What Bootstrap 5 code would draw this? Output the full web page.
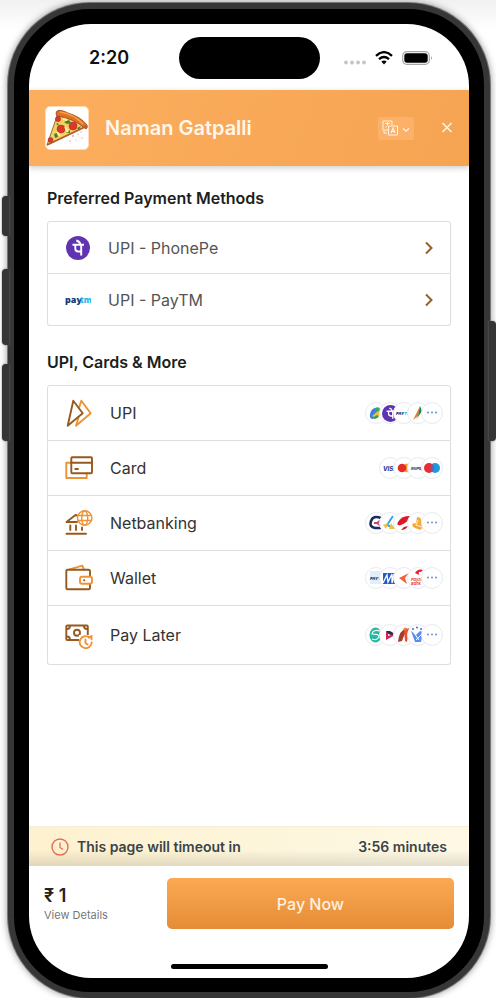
<!DOCTYPE html>
<html lang="en">
<head>
<meta charset="utf-8">
<meta name="viewport" content="width=device-width, initial-scale=1">
<title>Checkout - Naman Gatpalli</title>
<link href="https://cdn.jsdelivr.net/npm/bootstrap@5.3.0/dist/css/bootstrap.min.css" rel="stylesheet">
<style>
body{font-family:Inter,"Liberation Sans",sans-serif;font-size:16px;line-height:24px;min-height:100vh;padding:3px 6px 0 8px;background:linear-gradient(to bottom,#f1f1f1,#fff 30px);overflow-x:hidden}
.phone{position:relative;border:6px solid #363636;border-radius:82px;padding:15px 15px 14px;background:#000;box-shadow:0 0 0 1px #777,0 0 7px 1px #9a9a9a}
.side{position:absolute;width:7px;background:#353535;box-shadow:0 0 2px #777}
.side-l{left:-12px;border-radius:4px 0 0 4px}
.side-r{right:-12px;border-radius:0 4px 4px 0;top:312px;height:120px}
.side-mute{top:187px;height:40px}.side-up{top:260px;height:76px}.side-down{top:355px;height:77px}
.screen{background:#fff;border-radius:62px;overflow:hidden}
.status{display:grid;grid-template-columns:1fr 141px 1fr;height:66px;padding-top:2px}
.status time{font-size:18px;font-weight:600;color:#111;padding-left:60px}
.island{height:42px;border-radius:21px;background:#000}
.status-icons{padding-right:36px;gap:9px}
.brand{height:76px;padding:0 15px 0 16px;background:linear-gradient(110deg,#fcae5e,#f5a452);box-shadow:0 2px 6px #0003;position:relative}
.brand-logo{width:44px;height:44px;border-radius:5px;background:#fff;border:1px solid #ffdcb5}
.brand h1{font-size:20px;font-weight:600;color:#fff6ec;margin:0 0 0 16px;line-height:26px}
.lang{width:36px;height:23px;background:#fbb268;border:0;border-radius:2px;padding:0}
.closer{background:none;border:0;padding:0;width:14px;height:24px;margin-left:26px}
main{padding:20px 18px 0}
h2{font-size:16px;font-weight:600;line-height:24px;color:#1c1e21;margin:0 0 11px}
.pay-list{border-radius:3px;--bs-list-group-border-color:#dedede}
.pay-list .list-group-item{padding:0 7px 0 17px;gap:17px;min-height:55px;color:#333}
.pay-list.preferred{margin-bottom:24px}
.preferred .list-group-item{min-height:53px;padding-right:17px;color:#555}
.preferred .list-group-item+.list-group-item{min-height:52px}
.more .list-group-item:first-child{min-height:56px}
.more .list-group-item:last-child{min-height:59px}
.chip{width:22px;height:22px;border-radius:50%;border:1px solid #e9eaf0;background:#fff;overflow:hidden}
.chip+.chip{margin-left:-8px}
.chip svg{width:20px;height:20px;display:block}
.line{fill:none;stroke-width:1.9;stroke-linejoin:round;stroke-linecap:round}
.dk{stroke:#96591f}.lt{stroke:#ee9236}
.timeout{height:40px;padding:0 22px;gap:8px;font-size:14px;font-weight:600;color:#3a4448;background:linear-gradient(to bottom,#0000 58%,#0000001c),linear-gradient(to right,#fdf1cf,#fef9e5);border-top:1px solid #f4eedb}
.pay-foot{padding:12px 15px 9px}
.amount{width:123px;font-size:18px;font-weight:600;line-height:22px;color:#222}
.amount a{display:block;font-size:11px;font-weight:400;line-height:16px;color:#777;text-decoration:none}
.pay-btn{height:51px;border:0;border-radius:5px;font-weight:500;color:#fff0e0;background:linear-gradient(#fca953,#e48d36)}
.home{width:157px;height:5px;border-radius:3px;background:#000;margin-top:35px}
.phone,.screen{display:flex;flex-direction:column}
.phone{min-height:calc(100vh - 3px)}
</style>
<script src="https://cdn.jsdelivr.net/npm/bootstrap@5.3.0/dist/js/bootstrap.bundle.min.js"></script>
</head>
<body>
<svg width="0" height="0" class="position-absolute" aria-hidden="true">
<symbol id="dots" viewBox="0 0 20 20"><g fill="#6d8fd0"><circle cx="6" cy="9.500" r="1"/><circle cx="10" cy="9.500" r="1"/><circle cx="14" cy="9.500" r="1"/></g></symbol>
<symbol id="chev" viewBox="0 0 8 14"><path d="M1 1.500 6.500 7 1 12.500" fill="none" stroke="#94602b" stroke-width="2"/></symbol>
<symbol id="pe" viewBox="0 0 24 24"><circle cx="12" cy="12" r="12" fill="#6034b1"/><path d="M6.500 8.800H18M15.200 8.800V19.500M9.300 9v3.500q0 3 3 3H15M14.500 8.300Q13.500 5.300 10.300 4.500" fill="none" stroke="#fff" stroke-width="1.900"/></symbol>
</svg>
<div class="phone">
<span class="side side-l side-mute"></span><span class="side side-l side-up"></span><span class="side side-l side-down"></span><span class="side side-r"></span>
<div class="screen flex-grow-1">
<div class="status align-items-center">
<time>2:20</time><div class="island"></div>
<div class="status-icons d-flex justify-content-end align-items-center">
<svg width="22" height="14" viewBox="0 0 22 14"><g fill="#c6c6c6"><circle cx="2" cy="11.500" r="1.900"/><circle cx="8" cy="11.500" r="1.900"/><circle cx="14" cy="11.500" r="1.900"/><circle cx="20" cy="11.500" r="1.900"/></g></svg>
<svg width="18" height="14" viewBox="0 0 18 14"><path d="M1 4.800Q9-2.500 17 4.800M4 8.100q5-4.200 10 0" fill="none" stroke="#000" stroke-width="2.300"/><path d="M6.300 10.600Q9 8.500 11.700 10.600L9 13.500Z"/></svg>
<svg width="31" height="14" viewBox="0 0 31 14"><rect x=".7" y=".7" width="26.600" height="12.600" rx="4" fill="none" stroke="#a8a8a8" stroke-width="1.200"/><rect x="2.300" y="2.300" width="23.400" height="9.400" rx="2.700"/><path d="M29 5q2 2 0 4z" fill="#aaa"/></svg>
</div></div>
<header class="brand d-flex align-items-center">
<div class="brand-logo"><svg class="d-block" width="42" height="42" viewBox="0 0 42 42">
<path d="M12 6 1 38 41 19Z" fill="#f5cf62" stroke="#77512d" stroke-width=".8"/>
<path d="M11 4Q14 2 22 6 35 10 41 18q1 3-1 4Q27 11 11 9 9 6 11 4Z" fill="#e56f25" stroke="#934319" stroke-width=".8"/><path d="M14 5q14 2 23 12" fill="none" stroke="#f5a04a" stroke-width="1.400"/>
<g fill="#dc372b" stroke="#a42720" stroke-width=".5"><circle cx="15" cy="22" r="4"/><circle cx="27" cy="19" r="4"/><circle cx="12" cy="12" r="2.600"/><circle cx="4.500" cy="33" r="2.500"/></g>
<path d="m18 15 5-2 2 3-4 1zM8 27l3-1 1 4-3 1zM31 21l4-2-2 4zM10 17l2-1 1 3zM20 26l4-3v3z" fill="#438037"/><path d="m11 25 3 4M19 20l3 5M17 12l4 1" stroke="#ffef9b" stroke-width="2"/>
<path d="M1 38 41 19" stroke="#b45a26" stroke-width="1.500"/><g fill="#e3a1a1"><circle cx="27" cy="29" r=".9"/><circle cx="32" cy="27" r=".7"/><circle cx="24" cy="34" r=".8"/><circle cx="36" cy="31" r=".7"/><circle cx="30" cy="33" r=".5"/><circle cx="35" cy="25" r=".7"/></g></svg></div>
<h1>Naman Gatpalli</h1>
<button class="lang ms-auto" aria-label="Language"><svg class="d-block" width="36" height="23" viewBox="0 0 36 23"><g fill="none" stroke="#fff3e4"><path d="M10 13H5V4h9v4M10.500 9h9v9h-9zM6 14v2h3M7 6.500h5M9.500 5v3M7.500 10.500l2-2"/><path d="m13 16 2-5 2 5M14 14.500h2" stroke-width="1.200"/><path d="m25 11.500 3 2.700 3-2.700" stroke-width="1.200"/></g></svg></button>
<button class="closer" aria-label="Close"><svg class="d-block" width="14" height="24" viewBox="0 0 14 24"><path d="m2.500 7 9 9m0-9-9 9" stroke="#fff4e8" stroke-width="1.500"/></svg></button>
</header>
<main class="flex-grow-1">
<h2>Preferred Payment Methods</h2>
<div class="list-group pay-list preferred">
<button class="list-group-item list-group-item-action d-flex align-items-center"><svg width="26" height="24"><use href="#pe" x="1" width="24" height="24"/></svg><span class="flex-grow-1">UPI - PhonePe</span><svg width="8" height="14"><use href="#chev"/></svg></button>
<button class="list-group-item list-group-item-action d-flex align-items-center"><svg width="26" height="24" viewBox="0 0 26 24"><text y="15" font-family="Open Sans,sans-serif" font-weight="800" font-size="9" fill="#153a70"><tspan>pay</tspan><tspan x="15" font-size="8" fill="#29b9e6">tm</tspan></text></svg><span class="flex-grow-1">UPI - PayTM</span><svg width="8" height="14"><use href="#chev"/></svg></button>
</div>
<h2>UPI, Cards &amp; More</h2>
<div class="list-group pay-list more">
<button class="list-group-item list-group-item-action d-flex align-items-center">
<svg class="line" width="28" height="28" viewBox="0 0 28 28"><path class="lt" d="M14 9 16.300 1.700 25.700 14.300 11 26.700 13.500 18.500"/><path class="dk" d="M8.300 1.700 17.700 14.300 2.700 26.700Z"/></svg><span class="flex-grow-1">UPI</span>
<span class="d-flex">
<i class="chip"><svg viewBox="0 0 20 20"><path d="M4 11Q5 6 9 5l3 2-5 9q-4 0-3-5z" fill="#3d7de3"/><path d="M9 5q5-2 5 2v4l-5 1z" fill="#32a46c"/><path d="m6 13 6-5q4 1 3 4l-5 3z" fill="#eac043"/><path d="m6 15 5-3 2 2-4 2z" fill="#379d52"/></svg></i>
<i class="chip"><svg viewBox="0 0 20 20"><use href="#pe" x="2" y="2" width="17" height="17"/></svg></i>
<i class="chip"><svg viewBox="0 0 20 20"><text x="2" y="12" font-size="4" font-weight="900" fill="#174074">PAY<tspan fill="#29b9e6">TM</tspan></text></svg></i>
<i class="chip"><svg viewBox="0 0 20 20"><path d="m12 3-7 14 5-4z" fill="#ea7b35"/><path d="m12 3 2 5-6 9 2-4z" fill="#178348"/></svg></i>
<i class="chip"><svg><use href="#dots"/></svg></i></span></button>
<button class="list-group-item list-group-item-action d-flex align-items-center">
<svg class="line" width="28" height="28" viewBox="0 0 28 28"><path class="lt" d="M6 8.700H1.300V24H21.700V19.500"/><rect class="dk" x="6.300" y="3.300" width="20.700" height="16" rx="1"/><path class="dk" d="M6.300 8.700H27M10.300 15H13"/></svg><span class="flex-grow-1">Card</span>
<span class="d-flex">
<i class="chip"><svg viewBox="0 0 20 20"><text x="3" y="12.500" font-size="6" font-weight="800" fill="#2b3e9d">VISA</text></svg></i>
<i class="chip"><svg viewBox="0 0 20 20"><circle cx="13" cy="10" r="4.300" fill="#f59b27"/><circle cx="8" cy="10" r="4.300" fill="#e52c29"/></svg></i>
<i class="chip"><svg viewBox="0 0 20 20"><text x="3" y="11.500" font-size="4" font-style="italic" font-weight="800" fill="#343a83">RuPay</text></svg></i>
<i class="chip"><svg viewBox="0 0 20 20"><circle cx="13" cy="10" r="5" fill="#1d9ade"/><circle cx="7" cy="10" r="5" fill="#e72e37"/><path d="M10 6q3 4 0 8-3-4 0-8" fill="#6c5fb5"/></svg></i></span></button>
<button class="list-group-item list-group-item-action d-flex align-items-center">
<svg class="line" width="28" height="28" viewBox="0 0 28 28"><path class="dk" d="M12 13H1.500L10.500 6 12 6.500M5.300 16.500V21M11 16.500V21M17 18.500V21M1.500 24.700H21"/><g class="lt" stroke-width="1.400"><circle cx="19.700" cy="9" r="7.200"/><ellipse cx="19.700" cy="9" rx="3" ry="7.200"/><path d="M13 6.500H26.500M13 11.500H26.500"/></g></svg><span class="flex-grow-1">Netbanking</span>
<span class="d-flex">
<i class="chip"><svg viewBox="0 0 20 20"><path d="M15 5Q7 2 5 8t4 7h6" fill="none" stroke="#172d60" stroke-width="2.600"/><path d="M8 10h3l4-3M11 10l4 3" stroke="#cb4471" stroke-width="1.800" fill="none"/></svg></i>
<i class="chip"><svg viewBox="0 0 20 20"><path d="M13 3 7 12l7 3" fill="none" stroke="#39a7e5" stroke-width="2"/><path d="m3 12 5-2-2 6zM11 10l4 6H9z" fill="#f2be49"/></svg></i>
<i class="chip"><svg viewBox="0 0 20 20"><path d="M4 9Q8 2 16 3q-1 6-9 9Q2 13 4 9" fill="#dc1925"/><path d="m7 17 3-3 4-1q-2 4-7 4" fill="#dc1925"/></svg></i>
<i class="chip"><svg viewBox="0 0 20 20"><path d="M9 4q5 0 4 5l3 5-4 3-7-3-1-3 4-1z" fill="#f6ab38"/><path d="m10 7-2 5 6 2" fill="none" stroke="#fff0cb"/></svg></i>
<i class="chip"><svg><use href="#dots"/></svg></i></span></button>
<button class="list-group-item list-group-item-action d-flex align-items-center">
<svg class="line" width="28" height="28" viewBox="0 0 28 28"><path class="lt" d="M4.500 5.300 17.300 1.700 19 5.700"/><path class="dk" d="M25 12.500V7Q25 5.700 23.500 5.700H2.500Q1.300 5.700 1.300 7V24Q1.300 25.300 2.700 25.300H23.500Q25 25.300 25 24V20"/><rect class="lt" x="15" y="12.700" width="12" height="7" rx="2"/><path class="dk" d="M19 16.200h.3"/></svg><span class="flex-grow-1">Wallet</span>
<span class="d-flex">
<i class="chip"><svg viewBox="0 0 20 20"><path d="M4 3h12v13H4z" fill="#e2eff9"/><text x="4" y="11.500" font-size="4" font-weight="900" fill="#234a7a">PAYTM</text></svg></i>
<i class="chip"><svg viewBox="0 0 20 20"><path d="M3 5h12v11H3z" fill="#245bc4"/><path d="m3 15 4-8 1 7 4-8v9l2-9" fill="none" stroke="#fff" stroke-width="1.300"/></svg></i>
<i class="chip"><svg viewBox="0 0 20 20"><path d="m5 10 10-5-4 5 2 6z" fill="#ef6335"/></svg></i>
<i class="chip"><svg viewBox="0 0 20 20"><path d="M7 5q3-5 8-3l-2 2q-3-1-2 3z" fill="#e02432"/><text x="3" y="12.500" font-size="4" font-weight="600" fill="#dc303b">Payzap</text><text x="3" y="16.500" font-size="4" font-weight="600" fill="#dc303b">Bank</text></svg></i>
<i class="chip"><svg><use href="#dots"/></svg></i></span></button>
<button class="list-group-item list-group-item-action d-flex align-items-center">
<svg class="line" width="28" height="28" viewBox="0 0 28 28"><g class="dk"><rect x="1.300" y="4.500" width="21.500" height="14.500" rx="1"/><circle cx="12" cy="11.800" r="3"/><path d="M5 5Q5 8 2 8M19 5q0 3 3 3M5 18.500q0-3-3-3"/></g><path d="M14 14h14v14H14z" fill="#fff"/><path class="lt" d="M24.500 16.500A6 6 0 1 0 26.700 21.500M23.500 16.500 26.500 15V18.300M20.500 18.500V22L22.500 23.500"/></svg><span class="flex-grow-1">Pay Later</span>
<span class="d-flex">
<i class="chip"><svg viewBox="0 0 20 20"><ellipse cx="9.500" cy="10" rx="6" ry="7.500" fill="#24b9a2"/><path d="M14 6Q7 4 6 9q6 0 7 2-1 5-7 3" fill="none" stroke="#fff" stroke-width="1.200"/></svg></i>
<i class="chip"><svg viewBox="0 0 20 20"><path d="m6 6 9 4-9 5z" fill="#cf2456"/><path d="M6 6h4l5 3-5 1z" fill="#292b54"/><path d="m8 9 3 1-3 1z" fill="#fff"/></svg></i>
<i class="chip"><svg viewBox="0 0 20 20"><path d="M4 17Q5 5 13 3L8 16z" fill="#a73d28"/><path d="m10 5 5-2-2 14-2-1z" fill="#e6502c"/><circle cx="11" cy="4" r="1.500" fill="#e88736"/></svg></i>
<i class="chip"><svg viewBox="0 0 20 20"><path d="m3 6 5 4 4-4 3 1-2 10H7z" fill="#5c8ceb"/><path d="m6 8 5 7M14 9l-6 6" stroke="#fff"/><g fill="#4a69ca"><circle cx="5" cy="4" r="1"/><circle cx="9" cy="2.500" r="1"/><circle cx="13" cy="4" r="1"/></g></svg></i>
<i class="chip"><svg><use href="#dots"/></svg></i></span></button>
</div>
</main>
<div class="timeout d-flex align-items-center"><svg width="18" height="18" viewBox="0 0 18 18"><circle cx="9" cy="9" r="8" fill="none" stroke="#e36f56" stroke-width="1.400"/><path d="M9 4.500V9.500L12 11.500" fill="none" stroke="#e36f56" stroke-width="1.300"/></svg><span class="flex-grow-1">This page will timeout in</span><span>3:56 minutes</span></div>
<footer class="pay-foot">
<div class="d-flex align-items-center"><div class="amount">₹ 1<a href="#">View Details</a></div><button class="pay-btn flex-grow-1">Pay Now</button></div>
<div class="home mx-auto"></div>
</footer>
</div></div>
</body>
</html>
